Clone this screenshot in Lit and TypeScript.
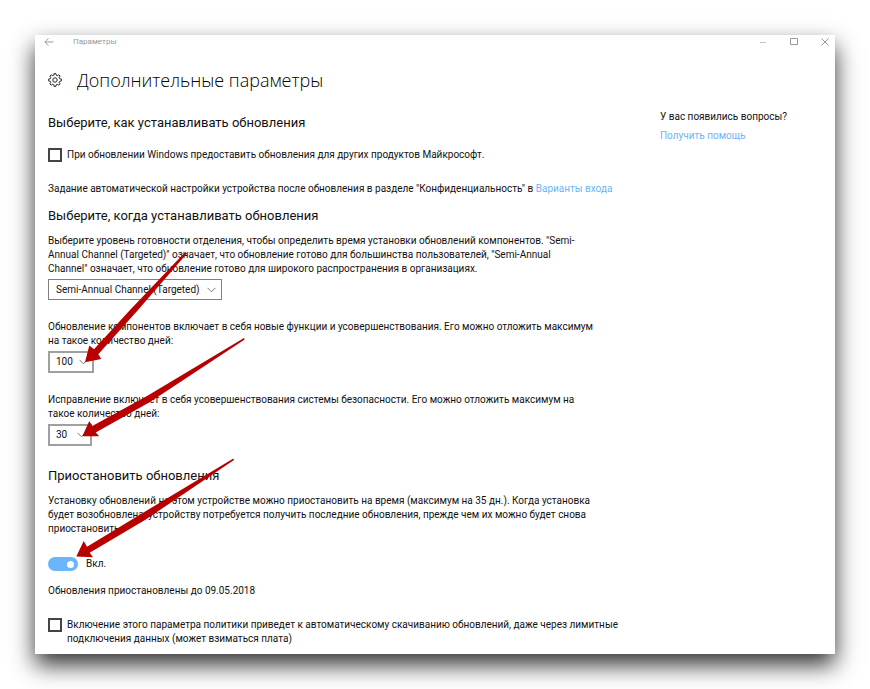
import { LitElement, html, css, svg } from "lit";
import { customElement, state } from "lit/decorators.js";

const chevron = html`<svg class="chevron" viewBox="0 0 9 6" aria-hidden="true">
  <path d="M0.5 0.8 4.5 4.8 8.5 0.8" />
</svg>`;

const arrows = [
  "185.3,252 187,253.4 138,310 98.3,354.3 101.3,358.9 85,362.3 89.3,345.5 94,349.3 130,310",
  "244,338 244.7,339.5 150,402 95.7,432.5 99.2,436.3 82.3,436.3 89.3,421 92.3,426 147,396",
  "233.4,458.4 234,460 145,520 89.7,552.8 93,557.2 76.3,556.5 83.7,541 87,546.7 141,514",
];

@customElement("app-root")
export class AppRoot extends LitElement {
  @state() private paused = true;

  static styles = css`
    :host {
      display: block;
      box-sizing: border-box;
      min-height: 100vh;
      padding: 35px;
      background: #fff;
      color: #111;
      font: 10px/14px Roboto, "Open Sans", sans-serif;
    }
    * {
      box-sizing: border-box;
    }
    .window {
      position: relative;
      background: #fff;
      box-shadow: 0 11px 22px rgba(0, 0, 0, 0.8);
      padding-bottom: 8px;
    }
    .titlebar {
      display: flex;
      align-items: center;
      height: 14px;
      padding: 0 5px 0 9px;
      color: #999;
      font-size: 8px;
    }
    .titlebar .name {
      flex: 1;
      padding-left: 19px;
    }
    .controls {
      display: flex;
      gap: 21px;
    }
    .icon-button {
      display: flex;
      padding: 0;
      border: 0;
      background: none;
      color: #999;
    }
    .icon-button svg {
      width: 10px;
      height: 10px;
    }
    svg {
      display: block;
      fill: none;
      stroke: currentColor;
    }
    .header {
      display: flex;
      align-items: center;
      gap: 15px;
      margin: 17px 13px 0;
    }
    .gear {
      width: 14px;
      height: 14px;
      color: #222;
    }
    h1 {
      margin: 0;
      font: 300 18px/28px "Open Sans", sans-serif;
      color: #000;
    }
    .columns {
      display: flex;
      justify-content: space-between;
      gap: 24px;
      padding: 16px 48px 0 13px;
    }
    main {
      padding-top: 3px;
    }
    .help {
      display: grid;
      align-content: start;
      gap: 5px;
      white-space: nowrap;
    }
    h2 {
      margin: 0;
      font-size: 13px;
      line-height: 20px;
      font-weight: 400;
    }
    p {
      margin: 0;
    }
    a {
      color: #6cb4fb;
      text-decoration: none;
    }
    .check {
      display: flex;
      gap: 5px;
    }
    .check input {
      appearance: none;
      flex: none;
      width: 14px;
      height: 14px;
      margin: 0;
      border: 2px solid #444;
      background: #fff;
    }
    .check input:checked {
      background: #6cb4fb;
    }
    .first {
      margin-top: 15px;
    }
    .privacy {
      margin: 20px 0 10px;
    }
    .text {
      margin-top: 8px;
    }
    .block {
      margin-top: 20px;
    }
    .pause {
      margin-top: 20px;
    }
    .field {
      display: flex;
      position: relative;
      width: max-content;
      margin-top: 3px;
    }
    select {
      appearance: none;
      height: 22px;
      margin: 0;
      padding: 0 6px;
      border: 2px solid #a0a0a0;
      border-radius: 0;
      background: #fff;
      color: inherit;
      font: inherit;
    }
    .wide {
      width: 174px;
      height: 21px;
      padding: 0 7px;
      border: 1px solid #808080;
    }
    .medium {
      width: 46px;
    }
    .small {
      width: 44px;
    }
    .chevron {
      position: absolute;
      right: 6px;
      top: 8px;
      width: 9px;
      height: 6px;
      color: #777;
      pointer-events: none;
    }
    .toggle {
      display: flex;
      align-items: center;
      gap: 8px;
      width: max-content;
      margin: 21px 0 13px;
    }
    .toggle input {
      appearance: none;
      display: flex;
      align-items: center;
      width: 30px;
      height: 14px;
      margin: 0;
      padding: 0 4px;
      border-radius: 7px;
      background: #999;
    }
    .toggle input::before {
      content: "";
      width: 7px;
      height: 7px;
      border-radius: 50%;
      background: #fff;
    }
    .toggle input:checked {
      justify-content: flex-end;
      background: #6cb4fb;
    }
    .arrows {
      position: absolute;
      left: 0;
      top: 0;
      width: 260px;
      height: 619px;
      fill: #b90000;
      stroke: none;
      pointer-events: none;
    }
  `;

  render() {
    return html`
      <div class="window">
        <header class="titlebar">
          <button class="icon-button" aria-label="Назад">
            <svg viewBox="0 0 10 10"><path d="M9.5 5H1M4.5 1.2 0.8 5 4.5 8.8" /></svg>
          </button>
          <span class="name">Параметры</span>
          <div class="controls">
            <button class="icon-button" aria-label="Свернуть">
              <svg viewBox="0 0 10 10"><path stroke-opacity="0.6" d="M2 5.5h6" /></svg>
            </button>
            <button class="icon-button" aria-label="Развернуть">
              <svg viewBox="0 0 10 10"><path d="M1.5 1.5h7v6h-7z" /></svg>
            </button>
            <button class="icon-button" aria-label="Закрыть">
              <svg viewBox="0 0 10 10"><path d="M1.5 1.5l7 7M8.5 1.5l-7 7" /></svg>
            </button>
          </div>
        </header>

        <div class="header">
          <svg class="gear" viewBox="0 0 14 14" aria-hidden="true">
            <path
              stroke-linejoin="round"
              d="M5.8 2.2 6.1.6h1.8l.3 1.6 1.1.5 1.4-.9 1.4 1.3-.9 1.5.5 1.1 1.7.4v1.8l-1.7.4-.5 1.1.9 1.4-1.4 1.4-1.4-.9-1.1.5-.3 1.6H6.1l-.3-1.6-1.1-.5-1.5.9-1.3-1.4.9-1.4-.5-1.1L.6 7.9V6.1l1.7-.4.5-1.1-.9-1.5 1.3-1.3 1.5.9z"
            />
            <circle cx="7" cy="7" r="2.2" />
          </svg>
          <h1>Дополнительные параметры</h1>
        </div>

        <div class="columns">
          <main>
            <h2>Выберите, как устанавливать обновления</h2>
            <label class="check first">
              <input type="checkbox" />
              <span>При обновлении Windows предоставить обновления для других продуктов Майкрософт.</span>
            </label>
            <p class="privacy">
              Задание автоматической настройки устройства после обновления в разделе "Конфиденциальность" в
              <a href="#signin">Варианты входа</a>
            </p>

            <h2>Выберите, когда устанавливать обновления</h2>
            <p class="text" id="channel">
              Выберите уровень готовности отделения, чтобы определить время установки обновлений компонентов. "Semi-<br />
              Annual Channel (Targeted)" означает, что обновление готово для большинства пользователей, "Semi-Annual<br />
              Channel" означает, что обновление готово для широкого распространения в организациях.
            </p>
            <div class="field">
              <select class="wide" aria-labelledby="channel">
                <option>Semi-Annual Channel (Targeted)</option>
                <option>Semi-Annual Channel</option>
              </select>
              ${chevron}
            </div>

            <p class="block" id="feature">
              Обновление компонентов включает в себя новые функции и усовершенствования. Его можно отложить максимум<br />
              на такое количество дней:
            </p>
            <div class="field">
              <select class="medium" aria-labelledby="feature"><option>100</option></select>
              ${chevron}
            </div>

            <p class="block" id="quality">
              Исправление включает в себя усовершенствования системы безопасности. Его можно отложить максимум на<br />
              такое количество дней:
            </p>
            <div class="field">
              <select class="small" aria-labelledby="quality"><option>30</option></select>
              ${chevron}
            </div>

            <h2 class="pause">Приостановить обновления</h2>
            <p class="text">
              Установку обновлений на этом устройстве можно приостановить на время (максимум на 35 дн.). Когда установка<br />
              будет возобновлена, устройству потребуется получить последние обновления, прежде чем их можно будет снова<br />
              приостановить.
            </p>
            <label class="toggle">
              <input
                type="checkbox"
                role="switch"
                .checked=${this.paused}
                @change=${(e: Event) => (this.paused = (e.target as HTMLInputElement).checked)}
              />
              <span>${this.paused ? "Вкл." : "Откл."}</span>
            </label>
            <p>Обновления приостановлены до 09.05.2018</p>
            <label class="check block">
              <input type="checkbox" />
              <span>
                Включение этого параметра политики приведет к автоматическому скачиванию обновлений, даже через лимитные<br />
                подключения данных (может взиматься плата)
              </span>
            </label>
          </main>
          <aside class="help">
            <span>У вас появились вопросы?</span>
            <a href="#help">Получить помощь</a>
          </aside>
        </div>

        <svg class="arrows" viewBox="35 35 260 619" aria-hidden="true">
          ${arrows.map((points) => svg`<polygon points=${points} />`)}
        </svg>
      </div>
    `;
  }
}
